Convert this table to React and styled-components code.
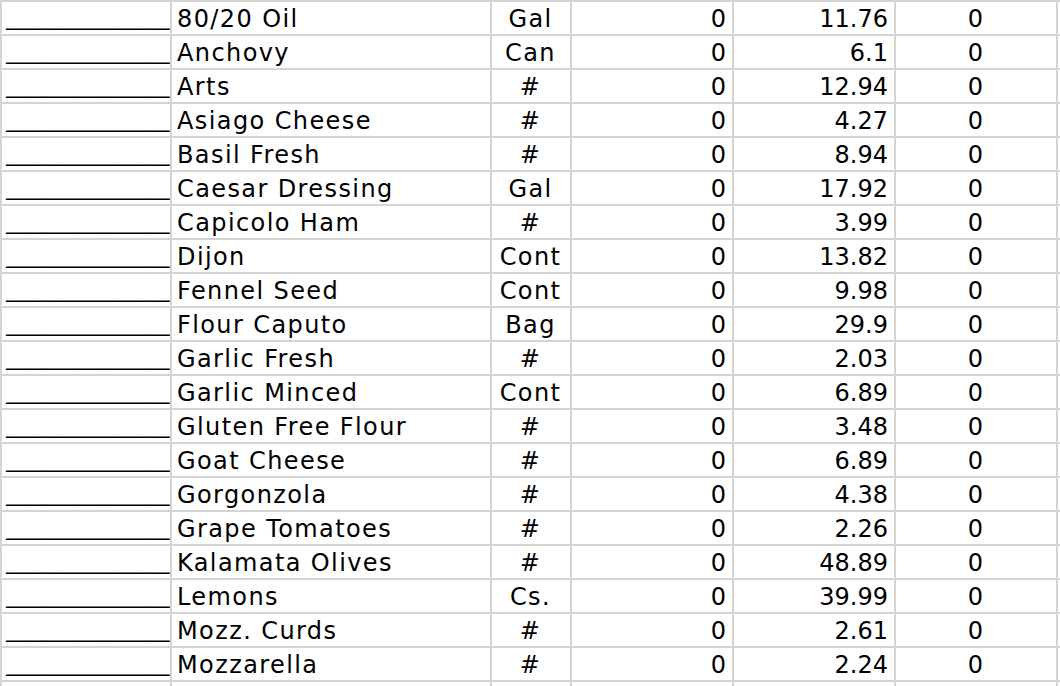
import React from 'react'
import styled, { createGlobalStyle } from 'styled-components'

const items = [
    ['80/20 Oil', 'Gal', 0, '11.76', 0],
    ['Anchovy', 'Can', 0, '6.1', 0],
    ['Arts', '#', 0, '12.94', 0],
    ['Asiago Cheese', '#', 0, '4.27', 0],
    ['Basil Fresh', '#', 0, '8.94', 0],
    ['Caesar Dressing', 'Gal', 0, '17.92', 0],
    ['Capicolo Ham', '#', 0, '3.99', 0],
    ['Dijon', 'Cont', 0, '13.82', 0],
    ['Fennel Seed', 'Cont', 0, '9.98', 0],
    ['Flour Caputo', 'Bag', 0, '29.9', 0],
    ['Garlic Fresh', '#', 0, '2.03', 0],
    ['Garlic Minced', 'Cont', 0, '6.89', 0],
    ['Gluten Free Flour', '#', 0, '3.48', 0],
    ['Goat Cheese', '#', 0, '6.89', 0],
    ['Gorgonzola', '#', 0, '4.38', 0],
    ['Grape Tomatoes', '#', 0, '2.26', 0],
    ['Kalamata Olives', '#', 0, '48.89', 0],
    ['Lemons', 'Cs.', 0, '39.99', 0],
    ['Mozz. Curds', '#', 0, '2.61', 0],
    ['Mozzarella', '#', 0, '2.24', 0],
]

const BLANK = '______________'

export default function App () {
    return (
        <>
            <GlobalStyle />
            <Sheet>
                {items.map(([name, unit, count, price, total]) => (
                    <Row key={name}>
                        <BlankCell>{BLANK}</BlankCell>
                        <Cell $text>{name}</Cell>
                        <Cell $text $align="center">{unit}</Cell>
                        <Cell $align="right">{count}</Cell>
                        <Cell $align="right">{price}</Cell>
                        <Cell $align="center">{total}</Cell>
                        <Cell />
                    </Row>
                ))}
                <Row>
                    <Cell /><Cell /><Cell /><Cell /><Cell /><Cell /><Cell />
                </Row>
            </Sheet>
        </>
    )
}

const GlobalStyle = createGlobalStyle`
    html, body {
        margin: 0;
        padding: 0;
        background: #ffffff;
        overflow: hidden;
    }
`

const Sheet = styled.div`
    width: 1060px;
    height: 686px;
    overflow: hidden;
    display: flex;
    flex-direction: column;
    gap: 2px;
    padding: 2px 0 0 2px;
    box-sizing: border-box;
    background-color: #d4d4d4;
    font-family: "DejaVu Sans", Verdana, sans-serif;
    font-size: 24px;
    color: #000000;
`

const Row = styled.div`
    display: grid;
    grid-template-columns: 168px 318px 78px 160px 160px 160px 1fr;
    gap: 2px;
    flex: 0 0 32px;
`

const Cell = styled.div`
    background-color: #ffffff;
    height: 32px;
    display: flex;
    align-items: flex-end;
    justify-content: ${p => p.$align === 'center' ? 'center' : p.$align === 'right' ? 'flex-end' : 'flex-start'};
    padding: 0 6px 1px 5px;
    line-height: 28px;
    letter-spacing: ${p => p.$text ? '1.4px' : '0'};
    white-space: nowrap;
    overflow: hidden;
    box-sizing: border-box;
`

const BlankCell = styled(Cell)`
    padding: 0 0 3px 4px;
    font-size: 23.4px;
`
